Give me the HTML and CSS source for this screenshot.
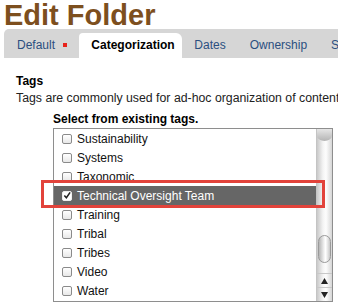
FILE: index.html
```html
<!DOCTYPE html>
<html lang="en">

<head>
    <meta charset="UTF-8">
    <meta name="viewport" content="width=device-width, initial-scale=1.0">
    <title>Edit Folder</title>
    <link rel="stylesheet" href="styles.css">
</head>

<body>
    <h1 class="title">Edit Folder</h1>

    <ul class="tabs">
        <li class="tab">Default <span class="required"></span></li>
        <li class="tab active">Categorization</li>
        <li class="tab">Dates</li>
        <li class="tab">Ownership</li>
        <li class="tab">Settings</li>
    </ul>

    <div class="field">
        <div class="field-label">Tags</div>
        <p class="field-help">Tags are commonly used for ad-hoc organization of content.</p>

        <div class="picker">
            <div class="picker-label">Select from existing tags.</div>
            <div class="listbox">
                <ul class="options">
                    <li class="option"><span class="check"></span>Sustainability</li>
                    <li class="option"><span class="check"></span>Systems</li>
                    <li class="option"><span class="check"></span>Taxonomic</li>
                    <li class="option selected"><span class="check checked">
                        <svg width="9" height="9" viewBox="0 0 9 9"><path d="M1.5 4.5 L3.8 7 L8 1" fill="none" stroke="#222" stroke-width="1.8"/></svg>
                    </span>Technical Oversight Team</li>
                    <li class="option"><span class="check"></span>Training</li>
                    <li class="option"><span class="check"></span>Tribal</li>
                    <li class="option"><span class="check"></span>Tribes</li>
                    <li class="option"><span class="check"></span>Video</li>
                    <li class="option"><span class="check"></span>Water</li>
                </ul>
                <div class="scrollbar">
                    <div class="scroll-cap"></div>
                    <div class="scroll-track"></div>
                    <div class="scroll-thumb"></div>
                    <div class="scroll-arrow">
                        <svg width="7" height="6" viewBox="0 0 7 6"><path d="M3.5 0 L7 6 L0 6 Z" fill="#222"/></svg>
                    </div>
                    <div class="scroll-arrow">
                        <svg width="7" height="6" viewBox="0 0 7 6"><path d="M0 0 L7 0 L3.5 6 Z" fill="#222"/></svg>
                    </div>
                </div>
                <div class="callout"></div>
            </div>
        </div>
    </div>
</body>

</html>
```

FILE: styles.css
```css
body {
    margin: 0;
    padding: 0 0 0 4px;
    font-family: "Liberation Sans", Arial, sans-serif;
    background: #fff;
    color: #000;
    overflow: hidden;
    white-space: nowrap;
}

.title {
    margin: 0;
    padding-top: 1px;
    height: 28px;
    font-size: 29px;
    line-height: 28px;
    font-weight: bold;
    color: #7d4f1e;
}

.tabs {
    list-style: none;
    margin: 0;
    padding: 4px 0 0 0;
    height: 25px;
    display: flex;
    align-items: flex-end;
    background: #d6d6d6;
    border-top-left-radius: 5px;
}

.tab {
    height: 25px;
    line-height: 25px;
    padding: 0 12px;
    font-size: 12px;
    color: #2b4f80;
}

.tab:first-child {
    padding-left: 13px;
}

.tab.active {
    background: #fff;
    color: #000;
    font-weight: bold;
    border-top-left-radius: 4px;
    border-top-right-radius: 6px;
    width: 79px;
}

.required {
    display: inline-block;
    width: 4px;
    height: 4px;
    margin-left: 5px;
    background: #e8231b;
    vertical-align: 2px;
}

.field {
    padding: 16px 0 0 12px;
}

.field-label {
    font-size: 12px;
    font-weight: bold;
    line-height: 15px;
}

.field-help {
    margin: 2px 0 0;
    font-size: 12.3px;
    line-height: 15px;
    color: #222;
}

.picker {
    padding: 6px 0 0 37px;
}

.picker-label {
    font-size: 12px;
    font-weight: bold;
    line-height: 15px;
}

.listbox {
    position: relative;
    display: flex;
    width: 278px;
    height: 172px;
    margin-top: 1px;
    border: 1px solid #8e8e8e;
    background: #fff;
}

.options {
    list-style: none;
    margin: 0;
    padding: 0;
    flex: 1;
}

.option {
    display: flex;
    align-items: center;
    height: 19px;
    padding-left: 8px;
    font-size: 12px;
    color: #111;
}

.option.selected {
    background: #666;
    color: #fff;
}

.check {
    display: inline-flex;
    align-items: center;
    justify-content: center;
    width: 8px;
    height: 8px;
    margin-right: 5px;
    border: 1px solid #8a8a8a;
    border-radius: 2px;
    background: linear-gradient(#fff, #e8e8e8);
}

.check.checked {
    border-color: #eee;
    background: #fff;
}

.check svg {
    display: block;
}

.scrollbar {
    width: 15px;
    display: flex;
    flex-direction: column;
    border-left: 1px solid #c4c4c4;
    background: linear-gradient(to right, #c9c9c9, #f4f4f4 40%, #fdfdfd 60%, #d6d6d6);
}

.scroll-cap {
    height: 12px;
    border-radius: 0 0 8px 8px / 0 0 6px 6px;
    background: linear-gradient(#e6e6e6, #b4b4b4);
}

.scroll-track {
    flex: 1;
}

.scroll-thumb {
    height: 26px;
    margin: 0 1px 10px;
    border: 1px solid #9a9a9a;
    border-radius: 7px;
    background: linear-gradient(to right, #b5b5b5, #f0f0f0 45%, #fff 60%, #c7c7c7);
}

.scroll-arrow {
    height: 13px;
    display: flex;
    align-items: center;
    justify-content: center;
    border-top: 1px solid #c8c8c8;
}

.callout {
    position: absolute;
    left: -13px;
    top: 51px;
    width: 278px;
    height: 22px;
    border: 3px solid #e2433b;
}
```
